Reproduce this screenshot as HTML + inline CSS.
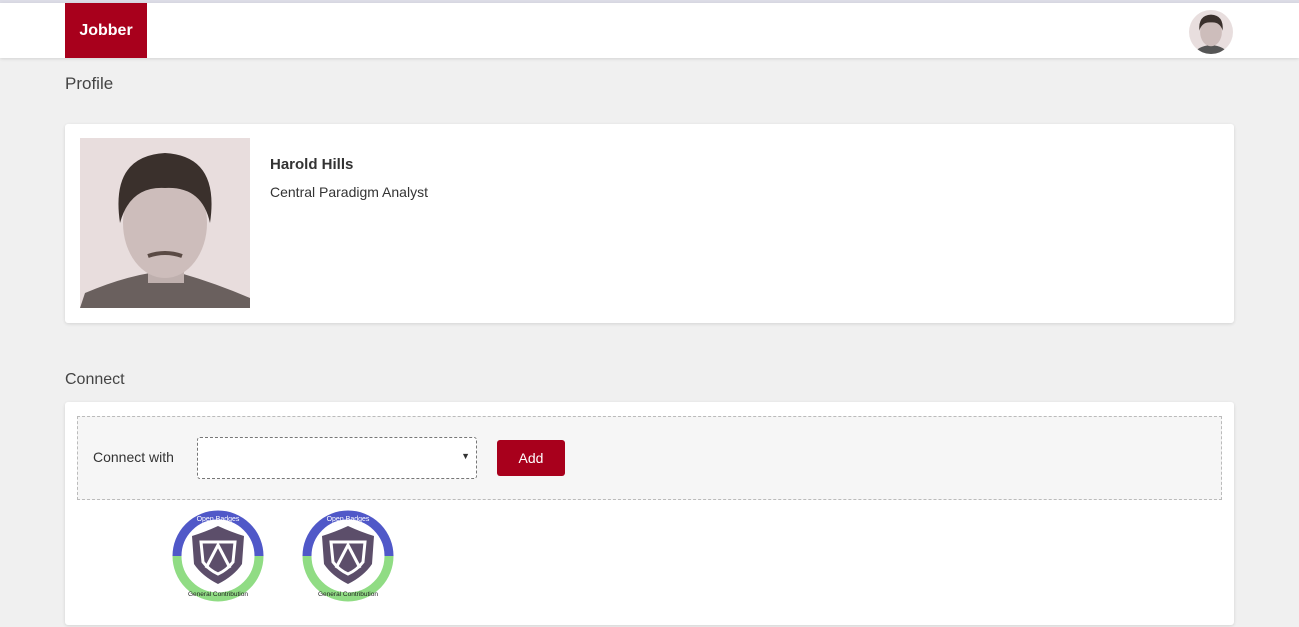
<!DOCTYPE html>
<html><head><style>
*{box-sizing:border-box;margin:0;padding:0}
body{width:1299px;height:627px;overflow:hidden;background:#f0f0f0;font-family:"Liberation Sans",sans-serif;color:#333;position:relative}
.top{position:absolute;left:0;top:0;width:1299px;height:3px;background:#dcdce6}
.hdr{position:absolute;left:0;top:3px;width:1299px;height:55px;background:#fff;box-shadow:0 1px 3px rgba(0,0,0,.12)}
.logo{position:absolute;left:65px;top:0;width:82px;height:55px;background:#a8001c;color:#fff;font-weight:bold;font-size:16px;line-height:55px;text-align:center}
.av{position:absolute;left:1189px;top:7px;width:44px;height:44px;border-radius:50%;overflow:hidden;background:#e8dede}
h2{position:absolute;font-weight:normal;font-size:17px;color:#444}
.card{position:absolute;left:65px;width:1169px;background:#fff;border-radius:3px;box-shadow:0 1px 3px rgba(0,0,0,.12)}
.photo{position:absolute;left:15px;top:14px;width:170px;height:170px;background:#e8dddd;overflow:hidden}
.box{position:absolute;left:12px;top:14px;width:1145px;height:84px;border:1px dashed #bbb;background:#f6f6f6}
.sel{position:absolute;left:119px;top:20px;width:280px;height:42px;border:1px dashed #777;border-radius:3px;background:#fff}
.btn{position:absolute;left:419px;top:23px;width:68px;height:36px;background:#a8001c;border-radius:3px;color:#fff;font-size:14px;text-align:center;line-height:36px}
</style></head><body>
<div class="top"></div>
<div class="hdr"><div class="logo">Jobber</div><div class="av"><svg width="44" height="44" viewBox="0 0 170 170"><path d="M20 170Q30 140 85 135Q140 140 150 170Z" fill="#555"/><ellipse cx="85" cy="85" rx="42" ry="55" fill="#cdbdbb"/><path d="M40 80Q35 20 85 18Q135 20 130 80Q120 45 85 48Q50 45 40 80Z" fill="#3a302c"/></svg></div></div>
<h2 style="left:65px;top:74px">Profile</h2>
<div class="card" style="top:124px;height:199px">
<div class="photo"><svg width="170" height="170" viewBox="0 0 170 170"><path d="M0 170L5 155Q40 140 70 135L100 135Q135 145 170 160L170 170Z" fill="#6a605e"/><rect x="68" y="115" width="36" height="30" fill="#bfb0ae"/><ellipse cx="85" cy="85" rx="42" ry="55" fill="#cdbdbb"/><path d="M40 85Q30 18 85 15Q140 18 130 85Q122 48 85 50Q50 48 40 85Z" fill="#3a302c"/><path d="M68 118Q85 112 102 118" stroke="#5a4a44" stroke-width="4" fill="none"/></svg></div>
<div style="position:absolute;left:205px;top:32px;font-weight:bold;font-size:15px">Harold Hills</div>
<div style="position:absolute;left:205px;top:60px;font-size:14px">Central Paradigm Analyst</div>
</div>
<h2 style="left:65px;top:371px;font-size:16px">Connect</h2>
<div class="card" style="top:402px;height:223px">
<div class="box">
<div style="position:absolute;left:15px;top:32px;font-size:14px">Connect with</div>
<div class="sel"><span style="position:absolute;right:6px;top:13px;font-size:9px">▼</span></div>
<div class="btn">Add</div>
</div>
<svg style="position:absolute;left:107px;top:108px" width="92" height="92" viewBox="0 0 92 92"><path d="M5 46A41 41 0 0 1 87 46" fill="none" stroke="#5058c8" stroke-width="9"/><path d="M5 46A41 41 0 0 0 87 46" fill="none" stroke="#90dc84" stroke-width="9"/><text x="46" y="11" font-size="7" fill="#fff" text-anchor="middle" font-family="Liberation Sans">Open Badges</text><text x="46" y="86" font-size="6.5" fill="#222" text-anchor="middle" font-family="Liberation Sans">General Contribution</text><path d="M20 26Q33 22 46 16Q59 22 72 26L70 54Q62 66 46 74Q30 66 22 54Z" fill="#5c4e6a"/><path d="M29 32L63 32L61 52Q55 60 46 64Q37 60 31 52Z" fill="none" stroke="#fff" stroke-width="3"/><path d="M34 58L46 35L58 58" fill="none" stroke="#fff" stroke-width="3"/></svg>
<svg style="position:absolute;left:237px;top:108px" width="92" height="92" viewBox="0 0 92 92"><path d="M5 46A41 41 0 0 1 87 46" fill="none" stroke="#5058c8" stroke-width="9"/><path d="M5 46A41 41 0 0 0 87 46" fill="none" stroke="#90dc84" stroke-width="9"/><text x="46" y="11" font-size="7" fill="#fff" text-anchor="middle" font-family="Liberation Sans">Open Badges</text><text x="46" y="86" font-size="6.5" fill="#222" text-anchor="middle" font-family="Liberation Sans">General Contribution</text><path d="M20 26Q33 22 46 16Q59 22 72 26L70 54Q62 66 46 74Q30 66 22 54Z" fill="#5c4e6a"/><path d="M29 32L63 32L61 52Q55 60 46 64Q37 60 31 52Z" fill="none" stroke="#fff" stroke-width="3"/><path d="M34 58L46 35L58 58" fill="none" stroke="#fff" stroke-width="3"/></svg>
</div>
</body></html>
